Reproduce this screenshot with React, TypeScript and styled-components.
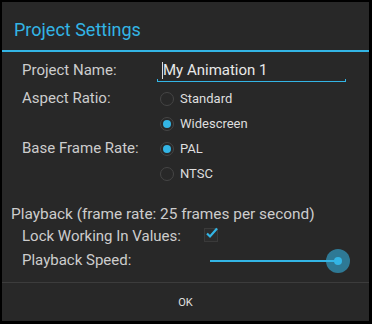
import React from "react";
import styled, { createGlobalStyle } from "styled-components";

const Global = createGlobalStyle`
	html, body { margin: 0; padding: 0; background: #000; }
	body { font-family: Roboto, "Noto Sans", sans-serif; }
`;

const BLUE = "#33b5e5";

const Frame = styled.div`
	width: 372px;
	height: 324px;
	box-sizing: border-box;
	border: 2px solid #000;
	border-right-width: 3px;
	border-bottom-width: 3px;
	background: #282828;
	display: flex;
	flex-direction: column;
	color: #cdcdcd;
`;

const Title = styled.h1`
	margin: 0;
	height: 50px;
	box-sizing: border-box;
	padding: 17px 0 0 12px;
	font-size: 18px;
	font-weight: 400;
	color: ${BLUE};
	border-bottom: 2px solid ${BLUE};
`;

const Body = styled.div`
	flex: 1;
	padding: 6px 0 0 0;
`;

const Form = styled.div`
	display: grid;
	grid-template-columns: 135px 1fr;
	padding-left: 20px;
	font-size: 15px;
`;

const Label = styled.div<{ $h: number }>`
	height: ${(p) => p.$h}px;
	line-height: 25px;
`;

const NameLabel = styled.div`
	height: 28px;
	line-height: 24px;
`;

const Field = styled.div`
	height: 28px;
	position: relative;
	margin-right: 23px;
	padding-left: 6px;
	line-height: 24px;
	color: #e8e8e8;
	&::after {
		content: "";
		position: absolute;
		left: 0;
		right: 0;
		bottom: 4px;
		height: 3px;
		border: 1px solid ${BLUE};
		border-top: none;
		box-sizing: border-box;
	}
	&::before {
		content: "";
		position: absolute;
		left: 5px;
		top: 4px;
		width: 1px;
		height: 17px;
		background: #ddd;
	}
`;

const Radios = styled.div`
	display: flex;
	flex-direction: column;
	padding-left: 3px;
`;

const RadioRow = styled.div`
	height: 25px;
	display: flex;
	align-items: center;
	gap: 6px;
	font-size: 13px;
	color: #dedede;
`;

const Dot = styled.span<{ $on?: boolean }>`
	width: 14px;
	height: 14px;
	box-sizing: border-box;
	border-radius: 50%;
	border: 1px solid #454545;
	display: flex;
	align-items: center;
	justify-content: center;
	&::after {
		content: "";
		width: 8px;
		height: 8px;
		border-radius: 50%;
		background: ${(p) => (p.$on ? BLUE : "transparent")};
	}
`;

const Section = styled.div`
	padding: 18px 0 0 9px;
	font-size: 15.4px;
	line-height: 20px;
`;

const SubRow = styled.div`
	display: flex;
	align-items: center;
	height: 24px;
	padding-left: 20px;
	font-size: 15px;
`;

const SubLabel = styled.span`
	width: 182px;
`;

const Check = styled.span`
	width: 12px;
	height: 12px;
	border: 1px solid #3a3a3a;
	background: #2c2c2c;
	position: relative;
	margin-top: -2px;
`;

const Slider = styled.div`
	width: 140px;
	height: 24px;
	position: relative;
	margin-left: 6px;
`;

const Track = styled.div`
	position: absolute;
	left: 0;
	right: 12px;
	top: 12px;
	height: 2px;
	background: ${BLUE};
`;

const Thumb = styled.div`
	position: absolute;
	right: 0;
	top: 1px;
	width: 24px;
	height: 24px;
	border-radius: 50%;
	background: rgba(51, 181, 229, 0.58);
	display: flex;
	align-items: center;
	justify-content: center;
	&::after {
		content: "";
		width: 8px;
		height: 8px;
		border-radius: 50%;
		background: ${BLUE};
	}
`;

const Footer = styled.div`
	height: 38px;
	border-top: 1px solid #3c3c3c;
	display: flex;
	align-items: center;
	justify-content: center;
	font-size: 11px;
	color: #e0e0e0;
`;

export default function App() {
	return (
		<>
			<Global />
			<Frame>
				<Title>Project Settings</Title>
				<Body>
					<Form>
						<NameLabel>Project Name:</NameLabel>
						<Field>My Animation 1</Field>
						<Label $h={50}>Aspect Ratio:</Label>
						<Radios>
							<RadioRow>
								<Dot />
								Standard
							</RadioRow>
							<RadioRow>
								<Dot $on />
								Widescreen
							</RadioRow>
						</Radios>
						<Label $h={50}>Base Frame Rate:</Label>
						<Radios>
							<RadioRow>
								<Dot $on />
								PAL
							</RadioRow>
							<RadioRow>
								<Dot />
								NTSC
							</RadioRow>
						</Radios>
					</Form>
					<Section>Playback (frame rate: 25 frames per second)</Section>
					<SubRow>
						<SubLabel>Lock Working In Values:</SubLabel>
						<Check>
							<svg width="14" height="12" viewBox="0 0 14 12" style={{ position: "absolute", left: 0, top: -2 }}>
								<path d="M2 6.5 L5 9.5 L12 1.5" fill="none" stroke={BLUE} strokeWidth="2.2" />
							</svg>
						</Check>
					</SubRow>
					<SubRow>
						<SubLabel>Playback Speed:</SubLabel>
						<Slider>
							<Track />
							<Thumb />
						</Slider>
					</SubRow>
				</Body>
				<Footer>OK</Footer>
			</Frame>
		</>
	);
}
